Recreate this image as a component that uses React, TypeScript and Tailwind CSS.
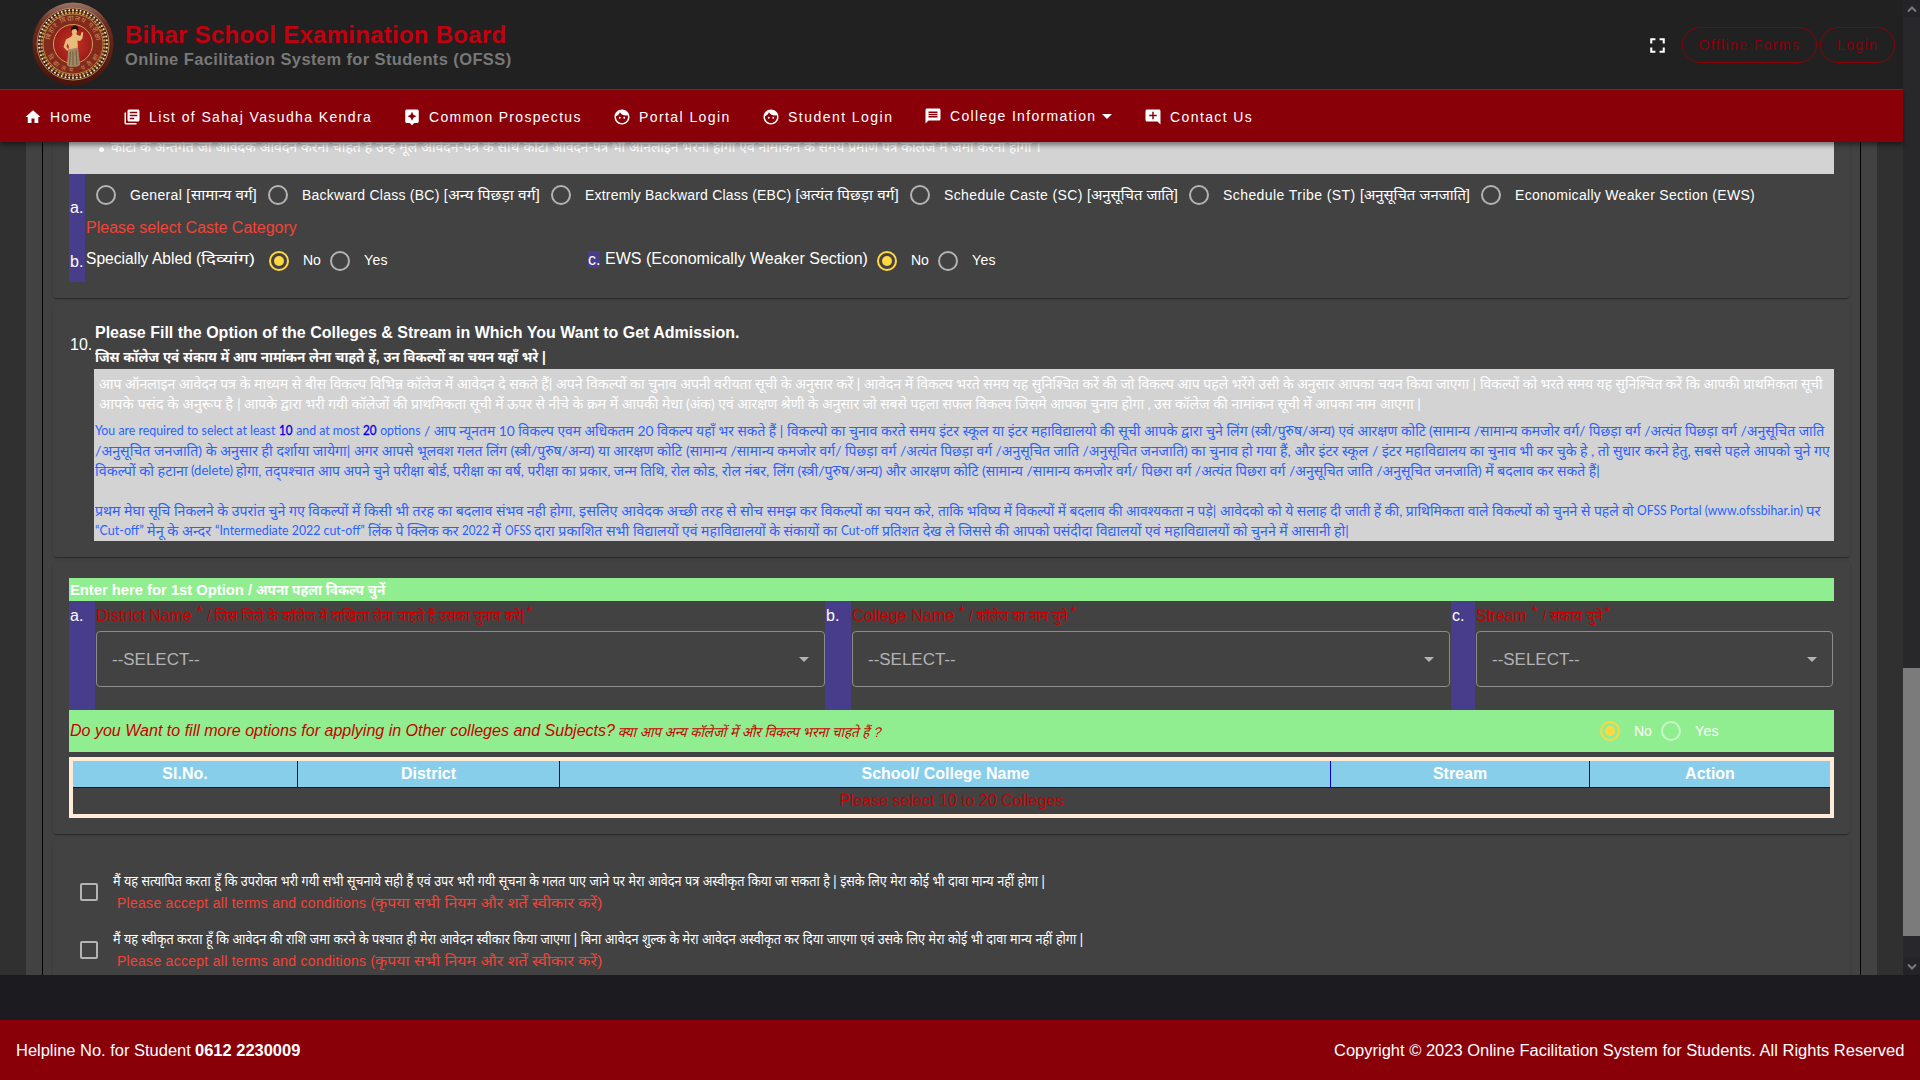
import { useLayoutEffect, useRef, type ReactNode } from "react";
import {
  MdAddComment,
  MdAssistant,
  MdFace,
  MdFullscreen,
  MdHome,
  MdLibraryBooks,
  MdMessage,
} from "react-icons/md";

/** Text run that fills the width of its box, either by tracking or by condensing. */
function Fit({ children, className = "", track = false }: { children: ReactNode; className?: string; track?: boolean }) {
  const outer = useRef<HTMLSpanElement>(null);
  const inner = useRef<HTMLSpanElement>(null);
  useLayoutEffect(() => {
    const o = outer.current;
    const i = inner.current;
    if (!o || !i) return;
    i.style.transform = "";
    i.style.letterSpacing = "0px";
    const natural = i.offsetWidth;
    const wanted = o.clientWidth;
    if (track) i.style.letterSpacing = `${(wanted - natural) / (i.textContent?.length || 1)}px`;
    else i.style.transform = `scaleX(${wanted / natural})`;
  }, [track]);
  return (
    <span ref={outer} className={`inline-block shrink-0 whitespace-pre ${className}`}>
      <span ref={inner} className="inline-block origin-left whitespace-pre">
        {children}
      </span>
    </span>
  );
}

type Seg = [string, string];

function Line({ segs, className = "" }: { segs: Seg[]; className?: string }) {
  return (
    <div className={`flex h-5 items-center leading-5 ${className}`}>
      {segs.map(([text, cls], n) => (
        <Fit key={n} className={cls}>
          {text}
        </Fit>
      ))}
    </div>
  );
}

function Radio({ on = false, light = false }: { on?: boolean; light?: boolean }) {
  return (
    <span
      className={`flex size-5 shrink-0 items-center justify-center rounded-full border-2 ${
        on ? "border-[#ffd740]" : light ? "border-[#c8f7c8]" : "border-[#b3b3b3]"
      }`}
    >
      {on && <span className="size-2.5 rounded-full bg-[#ffd740]" />}
    </span>
  );
}

function NoYes({ light = false }: { light?: boolean }) {
  return (
    <div className="flex h-5 items-center text-[14px]">
      <Radio on />
      <Fit track className="ml-[14px] w-[18px]">No</Fit>
      <span className="w-[9px]" />
      <Radio light={light} />
      <Fit track className="ml-[14px] w-[24px]">Yes</Fit>
    </div>
  );
}

function Seal() {
  const dots = Array.from({ length: 56 }, (_, i) => (i * Math.PI * 2) / 56);
  return (
    <svg viewBox="0 0 82 84" className="h-[84px] w-[82px] shrink-0">
      <defs>
        <linearGradient id="rim" x1="0" y1="0" x2="0" y2="1">
          <stop offset="0" stopColor="#9a7468" />
          <stop offset=".25" stopColor="#6d2c20" />
          <stop offset="1" stopColor="#4a130c" />
        </linearGradient>
        <radialGradient id="core">
          <stop offset="0" stopColor="#c4322a" />
          <stop offset="1" stopColor="#9c1c17" />
        </radialGradient>
        <path id="arcTop" d="M17.5 42a23.5 23.5 0 0 1 47 0" />
        <path id="arcBottom" d="M13 42a28 28 0 0 0 56 0" />
      </defs>
      <ellipse cx="41" cy="42" rx="40.5" ry="41.5" fill="url(#rim)" />
      <circle cx="41" cy="42" r="36" fill="#4a2216" stroke="#b98a4c" strokeWidth="1" />
      {dots.map((a, i) => (
        <circle key={i} cx={41 + 34 * Math.cos(a)} cy={42 + 34 * Math.sin(a)} r="1" fill="#f3e9da" />
      ))}
      {dots.map((a, i) => (
        <circle key={i} cx={41 + 31.5 * Math.cos(a)} cy={42 + 31.5 * Math.sin(a)} r="1.2" fill="#c99a45" />
      ))}
      <circle cx="41" cy="42" r="30" fill="#842a1d" stroke="#c99a55" strokeWidth=".8" />
      <text fontSize="7" fill="#c0905c" fontFamily="Noto Sans, sans-serif">
        <textPath href="#arcTop" startOffset="4" textLength="66">बिहार विद्यालय परीक्षा</textPath>
      </text>
      <text fontSize="6.5" fill="#c0905c" fontFamily="Noto Sans, sans-serif">
        <textPath href="#arcBottom" startOffset="12" textLength="64">विद्यालय परीक्षा</textPath>
      </text>
      <circle cx="41" cy="42" r="19.5" fill="url(#core)" stroke="#d0a060" strokeWidth="1" />
      <path
        d="M40 25.500c.8-2 5.200-2 5.800.8.400 2-.2 3.500-1.300 4.700l.3 1.800 3.500 1.200 1.400-4 1.600.6-.8 5.600-2.400 2.800-2.600-.6.300 6-.2 8-9.400.6.6-8.500-1-3-1.500 3 2.300 3-1.400 1.600-3.700-4 2.400-7.500 5.400-3.100 1.200-2.200c-1.100-1.800-1.300-4.800-.5-6.800z"
        fill="#e8bd7c"
      />
      <path d="M36.500 47.500 46 45.500l2 17.500-3.500 1.800H37l-2.200-2z" fill="#a38a66" />
      <path d="M39 27c.4-4.500 8-4.800 7.500.6l-1 2.400-1.500-3-3.500.5-.8 2.500z" fill="#24100b" />
      <path d="M38.500 49.500 37.500 63M41 49v14.500M44 48l1 15" stroke="#5a4631" strokeWidth=".7" fill="none" />
    </svg>
  );
}

const card =
  "rounded bg-[#424242] shadow-[0_2px_1px_-1px_rgba(0,0,0,0.2),0_1px_1px_0_rgba(0,0,0,0.14),0_1px_3px_0_rgba(0,0,0,0.12)]";

function Header() {
  return (
    <header className="flex h-[90px] items-start border-b border-[#424242] bg-[#212121] pl-8">
      <div className="pt-0.5">
        <Seal />
      </div>
      <div className="ml-[11px] flex flex-col pt-[21px]">
        <Fit track className="h-7 w-[381px] text-[24px] leading-7 font-bold text-[#c2000f]">Bihar School Examination Board</Fit>
        <Fit track className="h-5 w-[387px] text-[16.5px] leading-5 font-bold text-[#787878]">Online Facilitation System for Students (OFSS)</Fit>
      </div>
      <div className="ml-auto flex items-center pt-[27px] pr-2">
        <MdFullscreen className="mr-3 size-[25px] text-white" />
        <div className="flex h-9 w-[135px] items-center justify-center rounded-full border border-[#8a0009] text-[14px] text-[#8a0009]">
          <Fit track className="w-[102px]">Offline Forms</Fit>
        </div>
        <div className="ml-[3px] flex h-9 w-[75px] items-center justify-center rounded-full border border-[#8a0009] text-[14px] text-[#8a0009]">
          <Fit track className="w-[41px]">Login</Fit>
        </div>
      </div>
    </header>
  );
}

const nav = [
  { icon: MdHome, label: "Home", box: "w-[42px]", gap: "ml-6" },
  { icon: MdLibraryBooks, label: "List of Sahaj Vasudha Kendra", box: "w-[223px]", gap: "ml-[31px]" },
  { icon: MdAssistant, label: "Common Prospectus", box: "w-[153px]", gap: "ml-[31px]" },
  { icon: MdFace, label: "Portal Login", box: "w-[92px]", gap: "ml-[31px]" },
  { icon: MdFace, label: "Student Login", box: "w-[105px]", gap: "ml-[31px]" },
  { icon: MdMessage, label: "College Information", box: "w-[146px]", gap: "ml-[31px]", menu: true },
  { icon: MdAddComment, label: "Contact Us", box: "w-[83px]", gap: "ml-8" },
];

function Nav() {
  return (
    <nav className="relative z-10 flex h-[52px] items-center bg-[#8a0009] pt-0.5 text-[14px] text-white shadow-[0_3px_5px_rgba(0,0,0,0.45)]">
      {nav.map(({ icon: Icon, label, box, gap, menu }) => (
        <div key={label} className={`flex items-center ${gap} ${menu ? "pb-0.5" : ""}`}>
          <Icon className="size-[18px]" />
          <Fit track className={`ml-2 ${box}`}>{label}</Fit>
          {menu && <span className="ml-1.5 border-x-[5px] border-t-[5px] border-x-transparent border-t-white" />}
        </div>
      ))}
    </nav>
  );
}

const castes: { latin: Seg; hindi?: Seg }[] = [
  { latin: ["General [", "w-[61px]"], hindi: ["सामान्य वर्ग]", "w-[66px]"] },
  { latin: ["Backward Class (BC) [", "w-[146px]"], hindi: ["अन्य पिछड़ा वर्ग]", "w-[92px]"] },
  { latin: ["Extremly Backward Class (EBC) [", "w-[214px]"], hindi: ["अत्यंत पिछड़ा वर्ग]", "w-[100px]"] },
  { latin: ["Schedule Caste (SC) [", "w-[147px]"], hindi: ["अनुसूचित जाति]", "w-[87px]"] },
  { latin: ["Schedule Tribe (ST) [", "w-[141px]"], hindi: ["अनुसूचित जनजाति]", "w-[106px]"] },
  { latin: ["Economically Weaker Section (EWS)", "w-[240px]"] },
];

function CategoryCard() {
  return (
    <section className={`${card} h-[156px] shrink-0 rounded-t-none px-4`}>
      <div className="h-8 bg-[#d3d3d3]">
        <div className="flex h-5 -translate-y-[5px] items-center pl-[30px] text-[14px] leading-5">
          <span className="mr-[7px] size-[5px] translate-y-0.5 rounded-full bg-white" />
          <Line
            segs={[
              ["कोटा के अन्तर्गत जो आवेदक आवेदन करना चाहते हैं उन्हें मूल आवेदन-पत्र के साथ कोटा ", "w-[441px]"],
              ["आवेदन-पत्र भी ", "w-[77px]"],
              ["ऑनलाइन भरना होगा एवं नामांकन के समय प्रमाण पत्र कॉलेज में जमा करना होगा ।", "w-[412px]"],
            ]}
          />
        </div>
      </div>
      <div className="flex h-[108px]">
        <div className="w-4 bg-[#483d8b] pl-px">
          <div className="flex h-[68px] items-center">a.</div>
          <div className="flex h-10 items-center">b.</div>
        </div>
        <div className="flex flex-1 flex-col">
          <div className="flex h-[42px] items-center pl-[11px] text-[14px]">
            {castes.map(({ latin, hindi }) => (
              <div key={latin[0]} className="mr-[11px] flex items-center">
                <Radio />
                <Fit track className={`ml-[14px] ${latin[1]}`}>{latin[0]}</Fit>
                {hindi && <Fit className={hindi[1]}>{hindi[0]}</Fit>}
              </div>
            ))}
          </div>
          <Fit className="ml-px h-[23px] w-[211px] leading-[23px] text-[#f44336]">Please select Caste Category</Fit>
          <div className="flex h-10 items-center">
            <Fit className="ml-px w-[115px]">Specially Abled (</Fit>
            <Fit className="w-[54px] text-[15px]">दिव्यांग)</Fit>
            <span className="w-[14px]" />
            <div className="pt-[3px]">
              <NoYes />
            </div>
            <div className="mt-px ml-[200px] flex h-[17px] w-3 items-center bg-[#483d8b]">c.</div>
            <Fit className="mr-[9px] ml-[5px] w-[263px]">EWS (Economically Weaker Section)</Fit>
            <div className="pt-[3px]">
              <NoYes />
            </div>
          </div>
        </div>
      </div>
    </section>
  );
}

function CollegeInfoCard() {
  return (
    <section className={`${card} flex h-[254px] shrink-0 pt-[18px] pl-4`}>
      <div className="flex h-[47px] w-[25px] items-center pl-px">
        <Fit className="w-[22px]">10.</Fit>
      </div>
      <div className="flex w-[1740px] flex-col">
        <Fit className="ml-px h-6 w-[645px] leading-6 font-bold">
          Please Fill the Option of the Colleges &amp; Stream in Which You Want to Get Admission.
        </Fit>
        <Fit className="ml-px h-6 w-[451px] text-[14px] leading-6 font-bold">
          जिस कॉलेज एवं संकाय में आप नामांकन लेना चाहते हें, उन विकल्पों का चयन यहाँ भरे |
        </Fit>
        <div className="h-[172px] bg-[#d3d3d3] pt-[5px] pl-px font-[Lato,'Noto_Sans',sans-serif] text-[14px]">
          <div className="pl-1">
            <Line
              segs={[
                ["आप ऑनलाइन आवेदन पत्र के माध्यम से बीस विकल्प विभिन्न कॉलेज में आवेदन दे सकते हैं| ", "w-[457px]"],
                ["अपने विकल्पों का चुनाव अपनी वरीयता सूची के अनुसार करें | ", "w-[308px]"],
                ["आवेदन में विकल्प भरते समय यह सुनिश्चित करें की जो विकल्प आप पहले भरेंगे उसी के अनुसार आपका चयन किया जाएगा | ", "w-[616px]"],
                ["विकल्पों को भरते समय यह सुनिश्चित करें कि आपकी प्राथमिकता सूची", "w-[343px]"],
              ]}
            />
            <Line
              segs={[
                ["आपके पसंद के अनुरूप है | ", "w-[145px]"],
                ["आपके द्वारा भरी गयी कॉलेजों की प्राथमिकता सूची में ऊपर से नीचे के क्रम में आपकी मेधा ", "w-[442px]"],
                ["(अंक) एवं आरक्षण श्रेणी के अनुसार जो सबसे पहला सफल विकल्प जिसमे आपका चुनाव होगा , ", "w-[468px]"],
                ["उस कॉलेज की नामांकन सूची में आपका नाम आएगा |", "w-[267px]"],
              ]}
            />
          </div>
          <div className="pt-[7px] text-[#2a62ff]">
            <Line
              segs={[
                ["You are required to select at least ", "w-[184px] text-[12.5px]"],
                ["10", "w-[14px] text-[12.5px] text-[#0000e6] [-webkit-text-stroke:0.3px]"],
                [" and at most ", "w-[70px] text-[12.5px]"],
                ["20", "w-[14px] text-[12.5px] text-[#0000e6] [-webkit-text-stroke:0.3px]"],
                [" options ", "w-[47px] text-[12.5px]"],
                ["/ आप न्यूनतम 10 विकल्प एवम अधिकतम 20 विकल्प यहाँ भर सकते हैं | ", "w-[363px]"],
                ["विकल्पो का चुनाव करते समय इंटर स्कूल या इंटर महाविद्यालयो की सूची आपके द्वारा चुने लिंग ", "w-[464px]"],
                ["(स्त्री/पुरुष/अन्य) एवं आरक्षण कोटि ", "w-[178px]"],
                ["(सामान्य /सामान्य कमजोर वर्ग/ पिछड़ा वर्ग /अत्यंत पिछड़ा वर्ग /अनुसूचित जाति", "w-[395px]"],
              ]}
            />
            <Line
              segs={[
                ["/अनुसूचित जनजाति) के अनुसार ही दर्शाया जायेगा| ", "w-[259px]"],
                ["अगर आपसे भूलवश गलत लिंग (स्त्री/पुरुष/अन्य) या आरक्षण कोटि ", "w-[332px]"],
                ["(सामान्य /सामान्य कमजोर वर्ग/ पिछड़ा वर्ग /अत्यंत पिछड़ा वर्ग /अनुसूचित जाति /अनुसूचित जनजाति) ", "w-[505px]"],
                ["का चुनाव हो गया हैं, और इंटर स्कूल ", "w-[181px]"],
                ["/ इंटर महाविद्यालय का चुनाव भी कर चुके हे , तो सुधार करने हेतु, सबसे पहले आपको चुने गए", "w-[458px]"],
              ]}
            />
            <Line
              segs={[
                ["विकल्पों को हटाना ", "w-[96px]"],
                ["(delete) ", "w-[45px] text-[12.5px]"],
                ["होगा, तद्पश्चात आप अपने चुने परीक्षा बोर्ड, परीक्षा का वर्ष, परीक्षा का प्रकार, जन्म तिथि, रोल कोड, ", "w-[486px]"],
                ["रोल नंबर, लिंग (स्त्री/पुरुष/अन्य) और आरक्षण कोटि ", "w-[260px]"],
                ["(सामान्य /सामान्य कमजोर वर्ग/ पिछरा वर्ग /अत्यंत पिछरा वर्ग ", "w-[307px]"],
                ["/अनुसूचित जाति /अनुसूचित जनजाति) में बदलाव कर सकते हैं|", "w-[311px]"],
              ]}
            />
            <div className="h-5" />
            <Line
              segs={[
                ["प्रथम मेघा सूचि निकलने के उपरांत चुने गए विकल्पों में किसी भी तरह का बदलाव संभव नही होगा, ", "w-[484px]"],
                ["इसलिए आवेदक अच्छी तरह से सोच समझ कर विकल्पों का चयन करे, ", "w-[359px]"],
                ["ताकि भविष्य में विकल्पों में बदलाव की आवश्यकता न पड़े| ", "w-[282px]"],
                ["आवेदको को ये सलाह दी जाती हें की, प्राथिमिकता वाले विकल्पों को चुनने से पहले वो ", "w-[417px]"],
                ["OFSS Portal (www.ofssbihar.in) ", "w-[169px] text-[12.5px]"],
                ["पर", "w-[15px]"],
              ]}
            />
            <Line
              segs={[
                ["“Cut-off” ", "w-[52px] text-[12.5px]"],
                ["मेनू के अन्दर ", "w-[68px]"],
                ["“Intermediate 2022 cut-off” ", "w-[153px] text-[12.5px]"],
                ["लिंक पे क्लिक कर ", "w-[94px]"],
                ["2022 ", "w-[30px] text-[12.5px]"],
                ["में ", "w-[13px]"],
                ["OFSS ", "w-[29px] text-[12.5px]"],
                ["दारा प्रकाशित सभी विद्यालयों ", "w-[148px]"],
                ["एवं महाविद्यालयों के संकायों का ", "w-[159px]"],
                ["Cut-off ", "w-[41px] text-[12.5px]"],
                ["प्रतिशत देख ले जिससे की आपको पसंदीदा ", "w-[214px]"],
                ["विद्यालयों एवं महाविद्यालयों को चुनने में आसानी हो|", "w-[253px]"],
              ]}
            />
          </div>
        </div>
      </div>
    </section>
  );
}

function SelectField(p: {
  letter: string;
  col: string;
  bar: string;
  pad: string;
  label: string;
  labelBox: string;
  hindi: string;
  hindiBox: string;
}) {
  return (
    <div className={`flex ${p.col}`}>
      <div className={`${p.bar} shrink-0 bg-[#483d8b] pt-[3px] pl-px`}>{p.letter}</div>
      <div className={`flex flex-1 flex-col pl-px ${p.pad}`}>
        <div className="flex h-[30px] text-[#c80000]">
          <Fit className={`${p.labelBox} pt-[3px]`}>{p.label}</Fit>
          <span className="mr-[5px] ml-[5px] text-[14px] leading-5">*</span>
          <Fit className={`${p.hindiBox} pt-[5px] text-[14px] leading-5`}>{p.hindi}</Fit>
          <span className="ml-0.5 text-[14px] leading-5">*</span>
        </div>
        <div className="flex h-14 items-center justify-between rounded border border-[#8c8c8c] pr-[15px] pl-[15px] text-[#b3b3b3]">
          <Fit className="w-[88px] pt-0.5">--SELECT--</Fit>
          <span className="border-x-[5px] border-t-[5px] border-x-transparent border-t-[#b3b3b3]" />
        </div>
      </div>
    </div>
  );
}

function OptionsCard() {
  return (
    <section className={`${card} h-[272px] shrink-0 px-4 pt-4`}>
      <div className="flex h-[23px] items-center bg-[#90ee90] pt-px text-[15px] font-bold">
        <Fit className="ml-px w-[186px]">{"Enter here for 1st Option / "}</Fit>
        <Fit className="w-[129px] text-[14px]">अपना पहला विकल्प चुनें</Fit>
      </div>
      <div className="flex h-[109px]">
        <SelectField letter="a." col="w-[756px]" bar="w-[26px]" pad="" label="District Name" labelBox="w-[96px]" hindi="/ जिस जिले के कॉलेज में दाखिला लेना चाहते हैं उसका चुनाव करे|" hindiBox="w-[317px]" />
        <SelectField letter="b." col="w-[626px]" bar="w-[26px]" pad="pr-px" label="College Name" labelBox="w-[102px]" hindi="/ कॉलेज का नाम चुने" hindiBox="w-[99px]" />
        <SelectField letter="c." col="w-[383px]" bar="w-6" pad="pr-px" label="Stream" labelBox="w-[51px]" hindi="/ संकाय चुने" hindiBox="w-[60px]" />
      </div>
      <div className="flex h-[42px] items-center bg-[#90ee90]">
        <Fit className="ml-px w-[549px] text-[#c80000] italic">
          {"Do you Want to fill more options for applying in Other colleges and Subjects? "}
        </Fit>
        <Fit className="w-[263px] -skew-x-[14deg] pt-0.5 text-[14px] text-[#c80000]">
          क्या आप अन्य कॉलेजों में और विकल्प भरना चाहते हैं ?
        </Fit>
        <div className="ml-[718px]">
          <NoYes light />
        </div>
      </div>
      <div className="mt-[5px] border-4 border-[#ffebd7]">
        <div className="grid h-[27px] grid-cols-[225px_262px_771px_259px_1fr] border-b border-[#0000cd] bg-[#87ceeb] text-center leading-[26px] font-bold">
          <div className="border-r border-[#0000cd]">Sl.No.</div>
          <div className="border-r border-[#0000cd]">District</div>
          <div className="border-r border-[#0000cd] pl-px">School/ College Name</div>
          <div className="border-r border-[#0000cd]">Stream</div>
          <div>Action</div>
        </div>
        <div className="h-[26px] text-center leading-[26px] text-[#c80000]">Please select 10 to 20 Colleges</div>
      </div>
    </section>
  );
}

function Term({ text, box }: { text: string; box: string }) {
  return (
    <div className="flex h-[58px] pl-[27px]">
      <span className="mt-[17px] mr-[15px] size-[18px] shrink-0 rounded-[2px] border-2 border-[#b3b3b3]" />
      <div className="flex flex-col pt-1 text-[14px]">
        <Fit className={`h-[22px] leading-[22px] ${box}`}>{text}</Fit>
        <div className="flex h-[22px] pl-1 leading-[22px] text-[#f44336]">
          <Fit track className="w-[258px]">{"Please accept all terms and conditions ("}</Fit>
          <Fit className="w-[227px]">कृपया सभी नियम और शर्तें स्वीकार करें)</Fit>
        </div>
      </div>
    </div>
  );
}

function Scrollbar() {
  return (
    <div className="flex w-[17px] shrink-0 flex-col bg-[#28282b]">
      <div className="flex h-[17px] items-center justify-center bg-[#242428]">
        <svg viewBox="0 0 10 8" className="h-2 w-2.5" fill="none" stroke="#78787c" strokeWidth="2">
          <path d="M1 6.5 5 2.5 9 6.5" />
        </svg>
      </div>
      <div className="mt-[651px] h-[268px] bg-[#7b7b7b]" />
      <div className="mt-auto flex h-[17px] items-center justify-center bg-[#242428]">
        <svg viewBox="0 0 10 8" className="h-2 w-2.5" fill="none" stroke="#78787c" strokeWidth="2">
          <path d="M1 1.5 5 5.5 9 1.5" />
        </svg>
      </div>
    </div>
  );
}

export default function App() {
  return (
    <div className="flex h-[1080px] w-[1920px] flex-col overflow-hidden bg-[#1c1b20] font-['Liberation_Sans','Noto_Sans',sans-serif] text-[16px] text-white">
      <div className="flex h-[975px]">
        <div className="flex w-[1903px] flex-col bg-[#303030]">
          <Header />
          <Nav />
          <main className="mx-[26px] flex h-[833px] overflow-hidden bg-[#424242] px-4">
            <div className="flex w-[1819px] flex-col gap-[5px] overflow-hidden border-x border-black px-2.5">
              <CategoryCard />
              <CollegeInfoCard />
              <OptionsCard />
              <section className={`${card} h-[180px] shrink-0 pt-[27px]`}>
                <Term text="मैं यह सत्यापित करता हूँ कि उपरोक्त भरी गयी सभी सूचनाये सही हैं एवं उपर भरी गयी सूचना के गलत पाए जाने पर मेरा आवेदन पत्र अस्वीकृत किया जा सकता है | इसके लिए मेरा कोई भी दावा मान्य नहीं होगा |" box="w-[932px]" />
                <Term text="मैं यह स्वीकृत करता हूँ कि आवेदन की राशि जमा करने के पश्चात ही मेरा आवेदन स्वीकार किया जाएगा | बिना आवेदन शुल्क के मेरा आवेदन अस्वीकृत कर दिया जाएगा एवं उसके लिए मेरा कोई भी दावा मान्य नहीं होगा |" box="w-[970px]" />
              </section>
            </div>
          </main>
        </div>
        <Scrollbar />
      </div>
      <footer className="mt-auto flex h-[60px] items-center justify-between bg-[#8a0009] px-4 pt-0.5">
        <div className="flex">
          <Fit className="w-[179px]">{"Helpline No. for Student "}</Fit>
          <Fit className="w-[105px] font-bold">0612 2230009</Fit>
        </div>
        <Fit className="w-[570px]">Copyright © 2023 Online Facilitation System for Students. All Rights Reserved</Fit>
      </footer>
    </div>
  );
}
